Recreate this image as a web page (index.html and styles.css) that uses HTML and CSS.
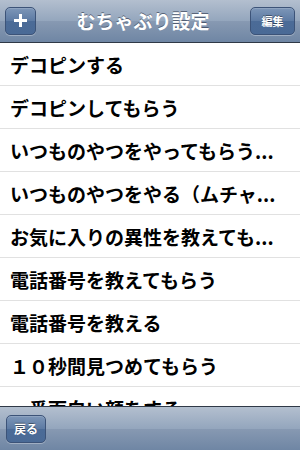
FILE: index.html
```html
<!DOCTYPE html>
<html lang="ja">
<head>
<meta charset="utf-8">
<link rel="stylesheet" href="styles.css">
</head>
<body>
<div class="screen">
  <header class="navbar">
    <button class="btn btn-add" aria-label="追加">
      <svg width="13" height="13" viewBox="0 0 13 13"><rect x="5" y="0" width="3" height="13" fill="#fff"/><rect x="0" y="5" width="13" height="3" fill="#fff"/></svg>
    </button>
    <h1 class="title">むちゃぶり設定</h1>
    <button class="btn btn-edit">編集</button>
  </header>
  <ul class="list">
    <li class="row">デコピンする</li>
    <li class="row">デコピンしてもらう</li>
    <li class="row">いつものやつをやってもらう...</li>
    <li class="row">いつものやつをやる（ムチャ...</li>
    <li class="row">お気に入りの異性を教えても...</li>
    <li class="row">電話番号を教えてもらう</li>
    <li class="row">電話番号を教える</li>
    <li class="row">１０秒間見つめてもらう</li>
    <li class="row">一番面白い顔をする</li>
  </ul>
  <footer class="toolbar">
    <button class="btn btn-back">戻る</button>
  </footer>
</div>
</body>
</html>
```

FILE: styles.css
```css
* { box-sizing: border-box; }
html, body { margin: 0; padding: 0; }
body {
  width: 300px;
  height: 450px;
  overflow: hidden;
  font-family: "Noto Sans CJK JP", "Noto Sans", sans-serif;
  background: #fff;
}
.screen {
  width: 300px;
  height: 450px;
  display: flex;
  flex-direction: column;
}
.navbar, .toolbar {
  flex: none;
  display: flex;
  align-items: center;
  background: linear-gradient(#b3bfcf 0%, #94a6bd 50%, #8799b2 51%, #6f86a4 100%);
}
.navbar {
  height: 43px;
  padding: 0 5px 1px 5px;
  border-bottom: 1px solid #2f3947;
  justify-content: space-between;
  z-index: 1;
}
.title {
  margin: 0;
  font-size: 19px;
  font-weight: bold;
  color: #fff;
  text-shadow: 0 -1px 0 rgba(40, 50, 70, 0.6);
  letter-spacing: 0;
}
.btn {
  border: 1px solid #3c5378;
  border-radius: 5px;
  background: linear-gradient(#7d96b8 0%, #5c7aa3 50%, #4b6b97 51%, #4a6a96 100%);
  box-shadow: 0 1px 0 rgba(255, 255, 255, 0.3), inset 0 1px 0 rgba(255,255,255,0.15);
  color: #fff;
  font-family: "Noto Sans CJK JP", sans-serif;
  font-weight: bold;
  padding: 0;
  display: flex;
  align-items: center;
  justify-content: center;
  text-shadow: 0 -1px 0 rgba(0,0,0,0.4);
}
.btn-add {
  width: 31px;
  height: 28px;
}
.btn-edit {
  width: 45px;
  height: 28px;
  font-size: 11px;
}
.list {
  flex: 1;
  margin: 0;
  padding: 0;
  list-style: none;
  overflow: hidden;
}
.row {
  height: 43px;
  border-bottom: 1px solid #e1e1e1;
  padding: 0 10px;
  display: flex;
  align-items: center;
  font-size: 19px;
  font-weight: bold;
  color: #000;
  white-space: nowrap;
  overflow: hidden;
}
.toolbar {
  height: 44px;
  padding: 0 6px;
  border-top: 1px solid #2f3947;
}
.btn-back {
  width: 40px;
  height: 28px;
  font-size: 12px;
}
```
